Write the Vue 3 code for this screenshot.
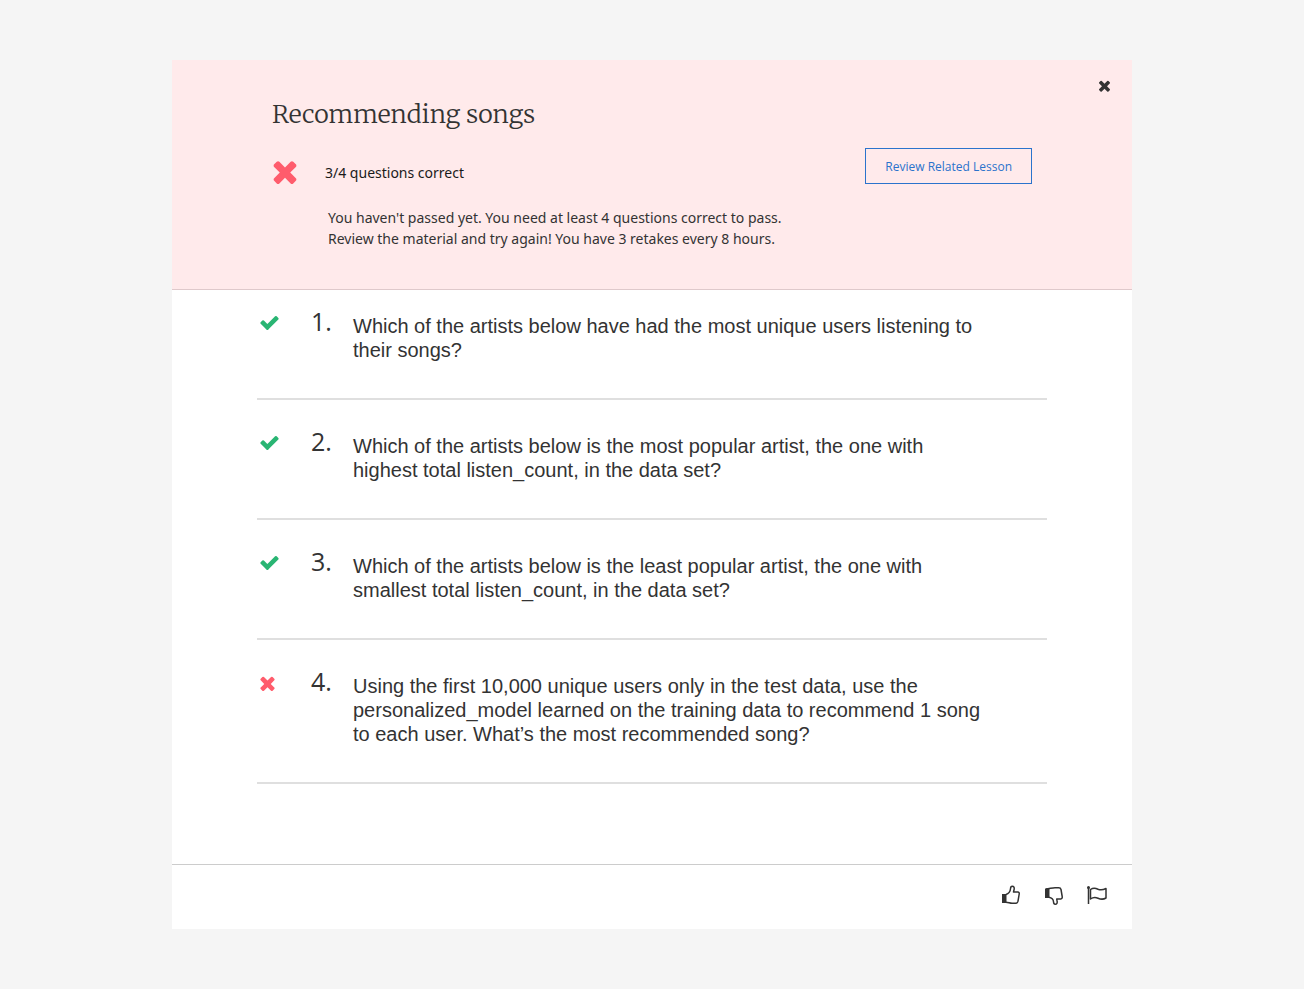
<script setup>
const timesPath =
  'M1490 1322q0 40-28 68l-136 136q-28 28-68 28t-68-28l-294-294-294 294q-28 28-68 28t-68-28l-136-136q-28-28-28-68t28-68l294-294-294-294q-28-28-28-68t28-68l136-136q28-28 68-28t68 28l294 294 294-294q28-28 68-28t68 28l136 136q28 28 28 68t-28 68l-294 294 294 294q28 28 28 68z'
const checkPath =
  'M1671 566q0 40-28 68l-724 724-136 136q-28 28-68 28t-68-28l-136-136-362-362q-28-28-28-68t28-68l136-136q28-28 68-28t68 28l294 295 656-657q28-28 68-28t68 28l136 136q28 28 28 68z'

const questions = [
  { correct: true, text: 'Which of the artists below have had the most unique users listening to their songs?' },
  { correct: true, text: 'Which of the artists below is the most popular artist, the one with highest total listen_count, in the data set?' },
  { correct: true, text: 'Which of the artists below is the least popular artist, the one with smallest total listen_count, in the data set?' },
  { correct: false, text: 'Using the first 10,000 unique users only in the test data, use the personalized_model learned on the training data to recommend 1 song to each user. What’s the most recommended song?' },
]
</script>

<template>
  <div class="page">
    <main class="card">
      <header class="summary">
        <button class="close" type="button" aria-label="Close">
          <svg viewBox="302 302 1188 1252" aria-hidden="true"><path :d="timesPath" /></svg>
        </button>
        <h1 class="title">Recommending songs</h1>
        <div class="result">
          <svg class="result-icon" viewBox="302 302 1188 1252" aria-hidden="true"><path :d="timesPath" /></svg>
          <p class="score">3/4 questions correct</p>
          <button class="review" type="button">Review Related Lesson</button>
        </div>
        <p class="message">
          You haven't passed yet. You need at least 4 questions correct to pass.<br />
          Review the material and try again! You have 3 retakes every 8 hours.
        </p>
      </header>

      <ol class="questions">
        <li v-for="(question, index) in questions" :key="index" class="question">
          <span class="mark">
            <svg v-if="question.correct" class="check" viewBox="121 334 1550 1188" aria-hidden="true"><path :d="checkPath" /></svg>
            <svg v-else class="cross" viewBox="302 302 1188 1252" aria-hidden="true"><path :d="timesPath" /></svg>
          </span>
          <span class="number">{{ index + 1 }}.</span>
          <p class="text">{{ question.text }}</p>
        </li>
      </ol>

      <footer class="feedback">
        <button type="button" aria-label="Like">
          <svg viewBox="0 0 20 20" aria-hidden="true">
            <path class="solid" d="M1 9h4.500v9H1z" />
            <path d="M5 9.500C7.500 8.800 9.300 6.200 9.500 3.800C9.600 1.900 10.300 1.300 11.200 1.300C12.900 1.300 13.500 2.700 13.100 4.500L12.500 7H16.800C18 7 18.400 7.800 18.200 9L17 16.200C16.700 17.600 16.100 18.300 14.800 18.300H11C9 18.300 7.500 17.400 5 17.200" />
          </svg>
        </button>
        <button type="button" aria-label="Dislike">
          <svg viewBox="0 0 20 20" aria-hidden="true">
            <path class="solid" d="M1 3.500h4.500v9.500H1z" />
            <path d="M2 4C5 4 8 2.700 11 2.700H14.800C16.100 2.700 16.700 3.300 17 4.500L18.200 11.500C18.400 12.900 18 13.900 16.800 13.900H12.700L13.100 16C13.500 17.800 12.900 19.200 11.200 19.200C10.300 19.200 9.600 18.500 9.500 16.700C9.300 14.500 7.500 12.800 5 12.300" />
          </svg>
        </button>
        <button type="button" aria-label="Report">
          <svg viewBox="0 0 20 20" aria-hidden="true">
            <path d="M1.500 2v17M3.500 4.500C6 2.700 8.500 3 11 4.200C13.500 5.300 16 5 19 3.500V13C16 14.800 13.500 14.300 11 13.200C8.500 12.200 6 12.200 3.500 14Z" />
            <circle class="solid" cx="1.500" cy="2.500" r="1.500" />
          </svg>
        </button>
      </footer>
    </main>
  </div>
</template>

<style>
body {
  margin: 0;
  background: #f5f5f5;
}
</style>

<style scoped>
.page {
  box-sizing: border-box;
  padding: 60px 24px;
  color: #333;
  font-family: "Open Sans", "Noto Sans", sans-serif;
}

.card {
  max-width: 960px;
  margin: 0 auto;
  background: #fff;
}

h1,
p,
ol {
  margin: 0;
  padding: 0;
}

button {
  padding: 0;
  border: 0;
  background: none;
  color: inherit;
  font-family: inherit;
  cursor: pointer;
}

svg {
  display: block;
  fill: currentColor;
}

.summary {
  position: relative;
  padding: 34px 100px 40px;
  border-bottom: 1px solid #dfc9cb;
  background: #ffeaeb;
}

.close {
  position: absolute;
  top: 18px;
  right: 20px;
  padding: 2px;
}

.close svg {
  width: 11px;
  height: 12px;
}

.title {
  color: #333;
  font-family: Merriweather, "Liberation Serif", serif;
  font-size: 25px;
  font-weight: 300;
  line-height: 40px;
}

.result {
  display: flex;
  align-items: center;
  min-height: 36px;
  margin-top: 14px;
}

.result-icon {
  width: 24px;
  height: 24px;
  margin: 12px 28px 0 1px;
  color: #ff5c6c;
}

.score {
  flex: 1;
  margin-top: 14px;
  color: #1a1a1a;
  font-family: "Noto Sans", "Open Sans", sans-serif;
  font-size: 14px;
  line-height: 20px;
}

.review {
  height: 36px;
  padding: 0 19px;
  border: 1px solid #2b73cc;
  color: #2b73cc;
  font-size: 12px;
}

.message {
  margin: 23px 0 0 56px;
  font-family: "Noto Sans", "Open Sans", sans-serif;
  font-size: 14px;
  line-height: 21px;
}

.questions {
  padding: 0 85px 80px;
  list-style: none;
}

.question {
  display: grid;
  grid-template-columns: 54px 42px 1fr;
  padding: 34px 60px 36px 0;
  border-bottom: 2px solid #dfdfdf;
}

.question:first-child {
  padding-top: 24px;
}

.mark {
  padding: 2px 0 0 3px;
}

.check {
  width: 19px;
  height: 14px;
  color: #29b573;
}

.cross {
  width: 15px;
  height: 15px;
  color: #ff5c6c;
}

.number {
  font-size: 25px;
  line-height: 14px;
}

.text {
  font-family: "Liberation Sans", Arial, sans-serif;
  font-size: 20px;
  line-height: 24px;
}

.feedback {
  display: flex;
  justify-content: flex-end;
  gap: 23px;
  padding: 20px 25px 24px;
  border-top: 1px solid #ccc;
}

.feedback svg {
  width: 20px;
  height: 20px;
  fill: none;
  stroke: currentColor;
  stroke-width: 1.5;
  stroke-linejoin: round;
}

.feedback .solid {
  fill: currentColor;
  stroke: none;
}
</style>
